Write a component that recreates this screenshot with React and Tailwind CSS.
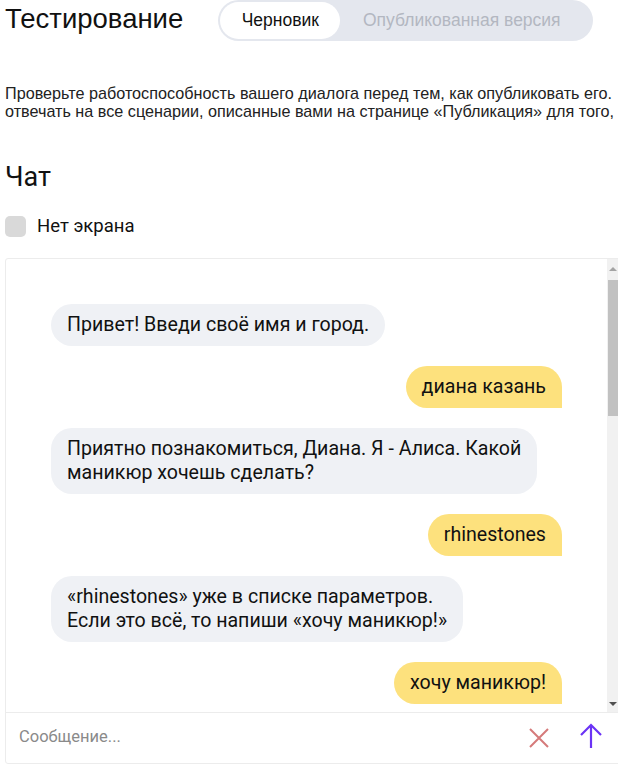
import React from 'react';

const messages = [
  { from: 'bot', text: 'Привет! Введи своё имя и город.' },
  { from: 'user', text: 'диана казань' },
  { from: 'bot', text: 'Приятно познакомиться, Диана. Я - Алиса. Какой\nманикюр хочешь сделать?' },
  { from: 'user', text: 'rhinestones' },
  { from: 'bot', text: '«rhinestones» уже в списке параметров.\nЕсли это всё, то напиши «хочу маникюр!»' },
  { from: 'user', text: 'хочу маникюр!' },
];

function Bubble({ from, text }) {
  if (from === 'user') {
    return (
      <div className="flex justify-end">
        <div className="bg-[#fde17d] rounded-[21px] rounded-br-none px-[16px] py-[9px] leading-[24px] whitespace-pre-line">
          {text}
        </div>
      </div>
    );
  }
  return (
    <div className="flex justify-start">
      <div className="bg-[#eff1f5] rounded-[21px] px-[16px] py-[9px] leading-[24px] whitespace-pre-line">
        {text}
      </div>
    </div>
  );
}

export default function App() {
  return (
    <div className="w-[618px] h-[779px] overflow-hidden bg-white text-[#111]">
      <div className="w-[700px] pl-[5px]">
        {/* header */}
        <div className="flex items-center gap-[35px] h-[41px]">
          <h1 className="text-[27.5px] leading-[32px] font-['Liberation_Sans',Arial,sans-serif] -mt-[4px]">
            Тестирование
          </h1>
          <div className="flex items-center bg-[#e4e7ee] rounded-full p-[2px] h-[41px] w-[375px] font-['Liberation_Sans',Arial,sans-serif] text-[17.5px]">
            <div className="bg-white rounded-full h-[37px] w-[120px] flex items-center justify-center">
              Черновик
            </div>
            <div className="flex-1 flex items-center justify-center text-[#b3b7c1] pr-[8px]">
              Опубликованная версия
            </div>
          </div>
        </div>

        <p className="mt-[43px] text-[16.2px] leading-[18px] text-[#222] whitespace-nowrap font-['Liberation_Sans',Arial,sans-serif]">
          Проверьте работоспособность вашего диалога перед тем, как опубликовать его.
          <br />
          отвечать на все сценарии, описанные вами на странице «Публикация» для того,
        </p>

        <h2 className="mt-[41px] text-[27px] leading-[32px] font-['Roboto',sans-serif]">Чат</h2>

        <label className="mt-[20px] flex items-center gap-[11px] font-['Roboto',sans-serif] text-[18.5px]">
          <span className="w-[21px] h-[21px] rounded-[5px] bg-[#d9d9d9]" />
          Нет экрана
        </label>

        <div className="mt-[17px] border border-[#ececec] rounded-[3px] w-[620px] font-['Roboto',sans-serif] text-[19.6px]">
          <div className="flex h-[453px]">
            <div className="flex-1 flex flex-col gap-[20px] pl-[45px] pr-[45px] pt-[45px] overflow-hidden">
              {messages.map((m, i) => (
                <Bubble key={i} {...m} />
              ))}
            </div>
            <div className="w-[17px] bg-[#f1f1f1] flex flex-col pt-[8px] pl-[1px]">
              <span className="ml-[1px] w-0 h-0 border-l-[4px] border-r-[4px] border-b-[4px] border-l-transparent border-r-transparent border-b-[#a3a3a3]" />
              <span className="mt-[9px] w-[15px] h-[136px] bg-[#c1c1c1]" />
              <span className="ml-[1px] mt-auto mb-[6px] w-0 h-0 border-l-[4px] border-r-[4px] border-t-[4px] border-l-transparent border-r-transparent border-t-[#505050]" />
            </div>
          </div>
          <div className="flex items-center h-[51px] border-t border-[#ececec] pl-[13px]">
            <span className="flex-1 text-[16.5px] text-[#8a8a8a]">Сообщение...</span>
            <svg width="22" height="22" viewBox="0 0 22 22" className="mr-[29px]">
              <path d="M2 2 L20 20 M20 2 L2 20" stroke="#d57a7a" strokeWidth="2" fill="none" />
            </svg>
            <svg width="24" height="26" viewBox="0 0 24 26" className="mr-[21px] -mt-[4px]">
              <path d="M12 25 V2 M2 12 L12 2 L22 12" stroke="#6b33f5" strokeWidth="2.2" fill="none" />
            </svg>
          </div>
        </div>
      </div>
    </div>
  );
}
